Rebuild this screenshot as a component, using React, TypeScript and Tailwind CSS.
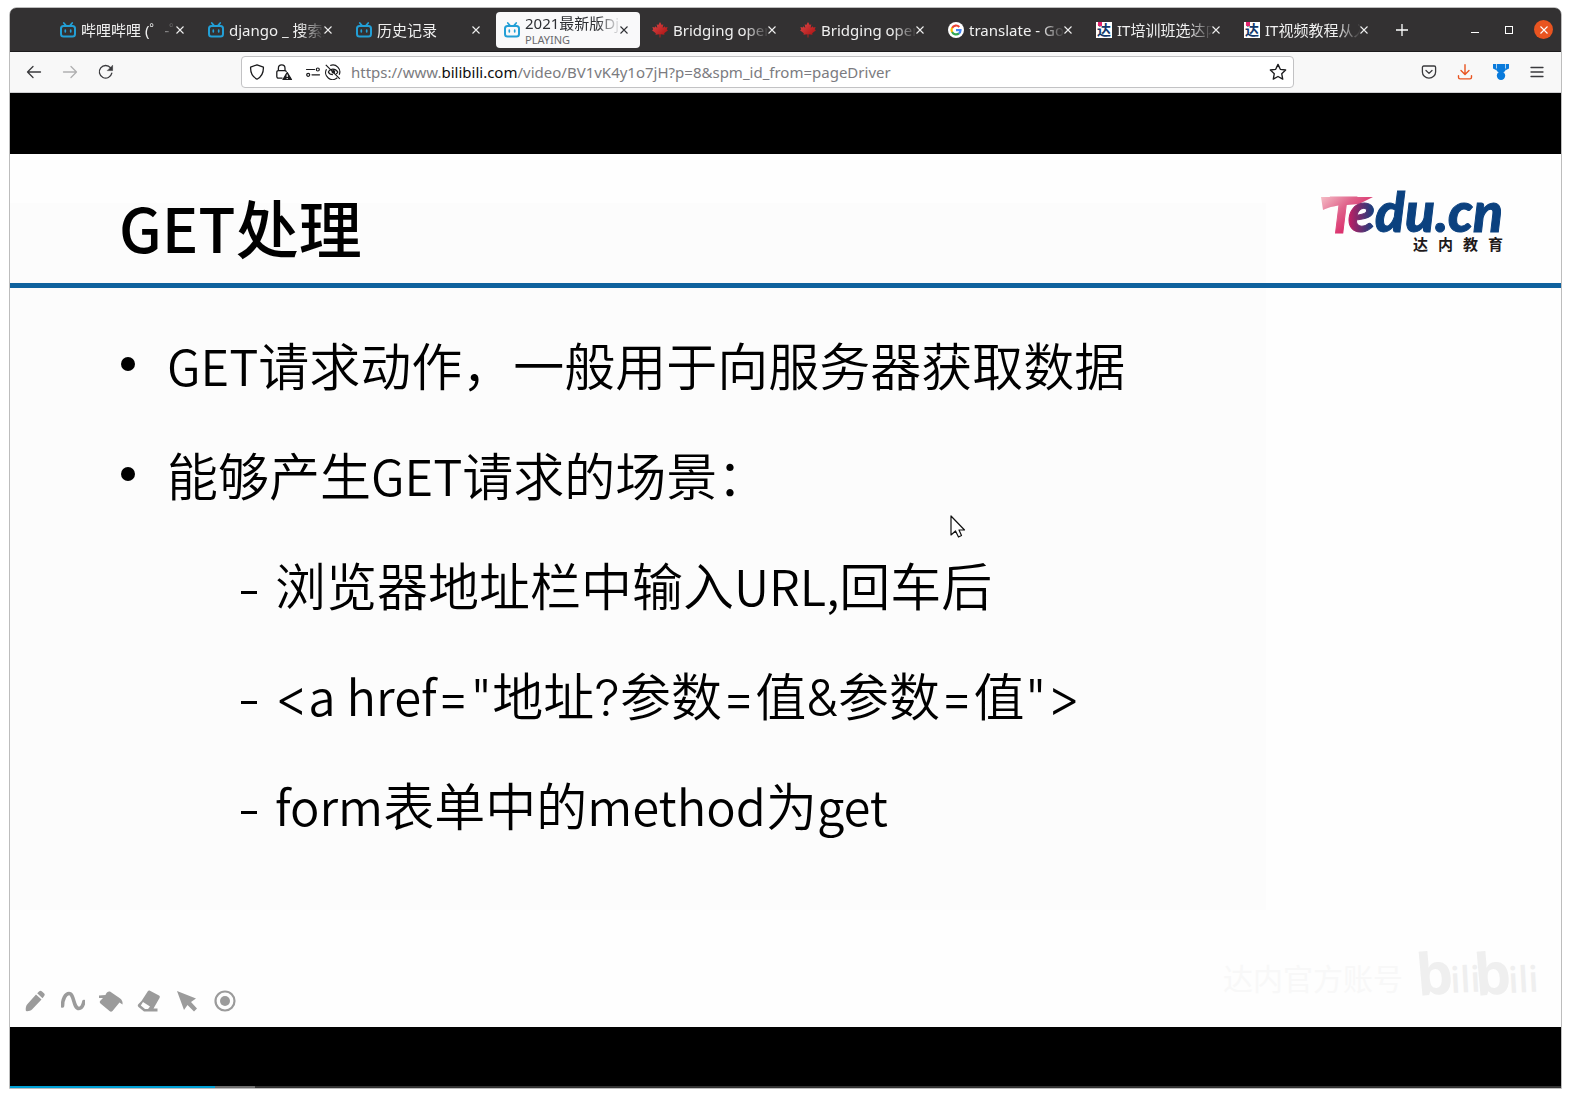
import type { ReactNode } from "react";

const UI_FONT = "font-['Noto_Sans','Noto_Sans_CJK_SC',sans-serif]";

function BiliIcon() {
  return (
    <svg viewBox="0 0 16 16" className="size-4 shrink-0" fill="none" stroke="#239fd6" strokeWidth="2" strokeLinecap="round">
      <rect x="1" y="4" width="14" height="10.5" rx="2.5" />
      <path d="M3.8 1l2 2.4M12.2 1l-2 2.4" strokeWidth="1.7" />
      <path d="M5.3 8.2v1.6M10.7 8.2v1.6" strokeWidth="1.7" />
    </svg>
  );
}

function MapleIcon() {
  return (
    <svg viewBox="0 0 16 16" className="size-4 shrink-0">
      <defs>
        <linearGradient id="maple" x1="0" y1="0" x2="1" y2="1">
          <stop offset="0" stopColor="#dc4a4a" />
          <stop offset="1" stopColor="#a80c0c" />
        </linearGradient>
      </defs>
      <path
        fill="url(#maple)"
        d="M8 0L9.7 2.9 11.3 2.2 10.7 6 12.7 4.3 13.2 5.4 15.6 5.1 14.8 7.4 16 8.2 12.2 11.2 12.5 12.8 8.5 12.3V15.6H7.5V12.3L3.5 12.8 3.8 11.2 0 8.2 1.2 7.4.4 5.1 2.8 5.4 3.3 4.3 5.3 6 4.7 2.2 6.3 2.9z"
      />
    </svg>
  );
}

function GoogleIcon() {
  return (
    <svg viewBox="0 0 16 16" className="size-4 shrink-0" fill="none" strokeWidth="2.2">
      <circle cx="8" cy="8" r="8" fill="#fff" />
      <path d="M4.1 5.9A4.500 4.500 0 0 1 11.300 4.900" stroke="#ea4335" />
      <path d="M4.100 10.200A4.500 4.500 0 0 1 4.100 5.800" stroke="#fbbc05" />
      <path d="M11 11.400A4.500 4.500 0 0 1 4.100 10" stroke="#34a853" />
      <path d="M8 8.200h4.500A4.500 4.500 0 0 1 10.900 11.500" stroke="#4285f4" />
    </svg>
  );
}

function DaIcon() {
  return (
    <span className="relative flex size-4 shrink-0 items-center justify-center overflow-hidden bg-white text-[14px] leading-4 font-bold text-[#12386b]">
      达
      <i className="absolute top-0 left-0.5 size-1 bg-[#e2246f]" />
    </span>
  );
}

function CloseMark() {
  return (
    <svg viewBox="0 0 8 8" className="size-2" fill="none" stroke="currentColor" strokeWidth="1.1">
      <path d="M.5.5l7 7M7.5.5l-7 7" />
    </svg>
  );
}

type TabData = { icon: ReactNode; title: string; active?: boolean };

const tabs: TabData[] = [
  { icon: <BiliIcon />, title: "哔哩哔哩 (゜-゜)つロ" },
  { icon: <BiliIcon />, title: "django _ 搜索结果" },
  { icon: <BiliIcon />, title: "历史记录" },
  { icon: <BiliIcon />, title: "2021最新版Django", active: true },
  { icon: <MapleIcon />, title: "Bridging open data" },
  { icon: <MapleIcon />, title: "Bridging open data" },
  { icon: <GoogleIcon />, title: "translate - Google" },
  { icon: <DaIcon />, title: "IT培训班选达内教育" },
  { icon: <DaIcon />, title: "IT视频教程从入门" },
];

function Tab({ icon, title, active }: TabData) {
  return (
    <div
      className={
        active
          ? "mx-0.5 flex h-9 min-w-0 flex-[0_1_144px] items-center gap-[5px] rounded bg-[#f9f9fa] pr-2 pl-2 text-[#2e3034]"
          : "mx-0.5 flex h-9 min-w-0 flex-[0_1_144px] items-center gap-[5px] rounded pr-2 pl-2 text-[#f0f0f0]"
      }
    >
      {icon}
      <button type="button" className="min-w-0 flex-1 text-left">
        <span
          className={
            active
              ? "block overflow-hidden mask-r-from-75% mask-r-to-100% text-[15px] leading-5 whitespace-nowrap"
              : "block overflow-hidden mask-r-from-75% mask-r-to-100% text-[15px] leading-6 whitespace-nowrap"
          }
        >
          {title}
        </span>
        {active && <span className="block text-[11px] leading-[13px] text-[#6a6a6e]">PLAYING</span>}
      </button>
      <button type="button" aria-label={`Close ${title}`} className="-ml-2.5 flex w-4 shrink-0 justify-center">
        <CloseMark />
      </button>
    </div>
  );
}

function TabStrip() {
  return (
    <div className="flex h-11 shrink-0 items-center rounded-t-md border-b border-[#1c1b1c] bg-[#333132] pr-2 pl-10">
      {tabs.map((t, i) => (
        <Tab key={i} {...t} />
      ))}
      <button type="button" aria-label="New tab" className="ml-3.5 text-white">
        <svg viewBox="0 0 12 12" className="size-3" stroke="currentColor" strokeWidth="1.3">
          <path d="M6 0v12M0 6h12" />
        </svg>
      </button>
      <div className="ml-auto flex items-center text-white">
        <button type="button" aria-label="Minimize" className="flex h-5 w-[34px] items-center justify-center">
          <span className="mt-1.5 h-px w-2 bg-white" />
        </button>
        <button type="button" aria-label="Maximize" className="flex h-5 w-[34px] items-center justify-center">
          <span className="size-2 border border-white" />
        </button>
        <button
          type="button"
          aria-label="Close window"
          className="ml-2 flex size-[19px] items-center justify-center rounded-full bg-[#e95420]"
        >
          <CloseMark />
        </button>
      </div>
    </div>
  );
}

function NavButton({ label, children, dim }: { label: string; children: ReactNode; dim?: boolean }) {
  return (
    <button
      type="button"
      aria-label={label}
      className={
        dim
          ? "flex h-9 w-9 items-center justify-center text-[#b0b0b1]"
          : "flex h-9 w-9 items-center justify-center text-[#3a3a3d]"
      }
    >
      <svg viewBox="0 0 16 16" className="size-4" fill="none" stroke="currentColor" strokeWidth="1.3" strokeLinecap="round" strokeLinejoin="round">
        {children}
      </svg>
    </button>
  );
}

function AddressBar() {
  return (
    <div className="mx-[117px] flex h-8 min-w-0 flex-1 items-center rounded border border-[#c2c2c4] bg-white pr-1.5 pl-[7px] text-[#1b1b1d]">
      <svg viewBox="0 0 16 16" className="size-4 shrink-0" fill="none" stroke="currentColor" strokeWidth="1.3">
        <path d="M8 .8L14.4 3.2C14.6 8.6 12.4 12.8 8 15.2 3.6 12.8 1.4 8.6 1.6 3.2z" strokeLinejoin="round" />
      </svg>
      <svg viewBox="0 0 18 16" className="ml-2.5 h-4 w-[18px] shrink-0" fill="none" stroke="currentColor" strokeWidth="1.3">
        <path d="M7.5 14.2H3.4A1.6 1.6 0 0 1 1.8 12.6V8.2A1.6 1.6 0 0 1 3.4 6.6H10a1.6 1.6 0 0 1 1.4 1.2M3.4 6.4V4.2a3.3 3.3 0 0 1 6.6 0v2.2" />
        <path d="M12.2 8.6L16.4 15.6H8z" fill="currentColor" strokeLinejoin="round" />
        <path d="M12.2 10.4v2.6M12.2 14v1.1" stroke="#fff" strokeWidth="1.2" />
      </svg>
      <svg viewBox="0 0 16 16" className="ml-3 size-4 shrink-0" fill="none" stroke="currentColor" strokeWidth="1.2">
        <path d="M1.500 5.500h8M7 10.800h7.500" strokeLinecap="round" />
        <circle cx="12.800" cy="5.500" r="1.500" />
        <circle cx="3.200" cy="10.800" r="1.500" />
      </svg>
      <svg viewBox="0 0 16 16" className="ml-1 size-4 shrink-0" fill="none" stroke="currentColor" strokeWidth="1.2">
        <path d="M5.200 1.500a7 7 0 0 1 9 9.300M12.300 13.800A7 7 0 0 1 1.500 5.200" />
        <path d="M3.200 7.800C4.500 6 6 5.200 7.800 5.200c2.100 0 3.900 1.100 5 2.800-.4.900-1 1.500-1.700 2M3.200 7.800c.8 1.900 2.600 2.900 4.700 2.900" />
        <circle cx="8.400" cy="7.700" r="1.200" fill="currentColor" />
        <path d="M.8.8l14 14" />
      </svg>
      <a
        href="https://www.bilibili.com/video/BV1vK4y1o7jH?p=8&spm_id_from=pageDriver"
        className="ml-2.5 min-w-0 flex-1 overflow-hidden text-[15px] whitespace-nowrap text-[#7b7b80]"
      >
        https://www.<span className="text-[#0c0c0d]">bilibili.com</span>/video/BV1vK4y1o7jH?p=8&amp;spm_id_from=pageDriver
      </a>
      <button type="button" aria-label="Bookmark this page">
        <svg viewBox="0 0 16 16" className="size-[18px]" fill="none" stroke="currentColor" strokeWidth="1.2" strokeLinejoin="round">
          <path d="M8 1.2l2.05 4.4 4.75.6-3.5 3.3.9 4.8L8 12l-4.2 2.3.9-4.8-3.5-3.3 4.75-.6z" />
        </svg>
      </button>
    </div>
  );
}

function Toolbar() {
  return (
    <div className="flex h-[41px] shrink-0 items-center border-b border-[#cfcfd1] bg-[#f8f8f8] px-1.5">
      <NavButton label="Back">
        <path d="M1.5 8h13M7 2.5L1.5 8 7 13.5" />
      </NavButton>
      <NavButton label="Forward" dim>
        <path d="M1.5 8h13M9 2.5L14.5 8 9 13.5" />
      </NavButton>
      <NavButton label="Reload">
        <path d="M13.8 9.2A6.3 6.3 0 1 1 12.6 3.9" />
        <path d="M14.6 1.6v5h-5z" fill="currentColor" strokeWidth=".6" />
      </NavButton>
      <AddressBar />
      <NavButton label="Save to Pocket">
        <path d="M2.8 2h10.4c.9 0 1.4.5 1.4 1.4V8a6.6 6.1 0 0 1-13.2 0V3.400c0-.9.5-1.400 1.400-1.400z" />
        <path d="M5 6.500l3 2.900 3-2.900" />
      </NavButton>
      <NavButton label="Downloads">
        <g stroke="#e95420" strokeWidth="1.4">
          <path d="M8 .8v9.400M4 6.500l4 4 4-4M1.500 11.800v1.500c0 1 .6 1.600 1.600 1.600h9.800c1 0 1.600-.6 1.600-1.600v-1.500" />
        </g>
      </NavButton>
      <NavButton label="Extension">
        <g fill="#0a7bdc" stroke="none">
          <path d="M0 0h3v6L0 4.500zM3.700 0h8.600v6.400L8 8.600 3.700 6.400zM13 0h3v4.500L13 6z" />
          <path d="M2.400 4.500h11.200L11 8.200H5z" />
          <circle cx="8" cy="11.800" r="4.200" />
        </g>
      </NavButton>
      <NavButton label="Open menu">
        <path d="M2 3.500h12M2 8h12M2 12.500h12" />
      </NavButton>
    </div>
  );
}

function TeduLogo() {
  return (
    <div className="flex flex-col items-end" role="img" aria-label="Tedu.cn 达内教育">
      <svg viewBox="0 0 184 41" className="h-[41px] w-[184px] overflow-visible">
        <defs>
          <linearGradient id="teduT" gradientUnits="userSpaceOnUse" x1="0" y1="2" x2="34" y2="40">
            <stop offset="0" stopColor="#f6c0c8" />
            <stop offset=".45" stopColor="#e0648c" />
            <stop offset="1" stopColor="#d8145c" />
          </linearGradient>
          <linearGradient id="teduE" gradientUnits="userSpaceOnUse" x1="26" y1="0" x2="54" y2="0">
            <stop offset="0" stopColor="#cf1c61" />
            <stop offset=".4" stopColor="#7e2a6c" />
            <stop offset="1" stopColor="#0b417f" />
          </linearGradient>
        </defs>
        <path d="M0 3H52L38 10 26 11C17 11 8 13 2 16z" fill="url(#teduT)" />
        <text x="6" y="39" fontFamily="Lato" fontWeight="900" fontStyle="italic" fontSize="50" fill="url(#teduT)" stroke="url(#teduT)">
          T
        </text>
        <text x="27" y="38" fontFamily="Lato" fontWeight="900" fontStyle="italic" fontSize="55" fill="url(#teduE)" stroke="url(#teduE)">
          edu.cn
        </text>
      </svg>
      <div className="flex gap-2.5 pr-0.5 text-[15px] leading-[18px] font-bold text-[#1f1a1b]">
        <span>达</span>
        <span>内</span>
        <span>教</span>
        <span>育</span>
      </div>
    </div>
  );
}

function Latin({ children }: { children: ReactNode }) {
  return <span className="text-[49px] leading-none">{children}</span>;
}

function Sym({ children }: { children: ReactNode }) {
  return <span className="font-['Inter',sans-serif] leading-none font-light">{children}</span>;
}

function Dash() {
  return <span className="mt-4 mr-[18px] h-[3px] w-4 bg-black" />;
}

function Slide() {
  return (
    <main className="relative flex flex-1 flex-col bg-[#fefefe] font-['Noto_Sans_CJK_SC',sans-serif] text-black">
      <div className="absolute top-[49px] left-0 h-[707px] w-[81%] bg-[#fcfcfc]" />
      <header className="relative flex h-[134px] shrink-0 items-start justify-between border-b-[5px] border-[#0f629e] pr-14 pl-[109px]">
        <h1 className="pt-6 text-[63px] leading-[96px] font-medium whitespace-nowrap">
          <span className="text-[61px] leading-none">GET</span>处理
        </h1>
        <div className="pt-10">
          <TeduLogo />
        </div>
      </header>

      <ul className="relative pt-[21px] pl-[111px] text-[51px] leading-[110px] font-[350] whitespace-nowrap">
        <li className="flex items-center">
          <span className="mr-8 size-3.5 rounded-full bg-black" />
          <p><Latin>GET</Latin>请求动作，一般用于向服务器获取数据</p>
        </li>
        <li>
          <div className="flex items-center">
            <span className="mr-8 size-3.5 rounded-full bg-black" />
            <p>能够产生<Latin>GET</Latin>请求的场景：</p>
          </div>
          <ul className="pl-[120px]">
            <li className="flex items-center">
              <Dash />
              <p>浏览器地址栏中输入<Latin>URL,</Latin>回车后</p>
            </li>
            <li className="flex items-center">
              <Dash />
              <p>
                <Sym>&lt;</Sym><Latin>a href</Latin><Sym>="</Sym>地址<Sym>?</Sym>参数<Sym>=</Sym>值<Sym>&amp;</Sym>参数<Sym>=</Sym>值<Sym>"&gt;</Sym>
              </p>
            </li>
            <li className="flex items-center">
              <Dash />
              <p><Latin>form</Latin>表单中的<Latin>method</Latin>为<Latin>get</Latin></p>
            </li>
          </ul>
        </li>
      </ul>

      <svg viewBox="0 0 16 24" className="absolute top-[361px] left-[940px] h-6 w-4" fill="#fff" stroke="#111" strokeWidth="1.200" strokeLinejoin="round">
        <path d="M1 1V20L5.500 16 8.500 22 11.500 20.500 9 15H14.500z" />
      </svg>

      <footer className="relative mt-auto flex items-end justify-between pr-7 pb-3.5 pl-[13px]">
        <DrawTools />
        <div className="flex items-end gap-4 pb-4 whitespace-nowrap">
          <span className="text-[30px] leading-[40px] text-[#f8f8f8]">达内官方账号</span>
          <BiliMark />
        </div>
      </footer>
    </main>
  );
}

function BiliMark() {
  return (
    <svg viewBox="0 0 114 50" className="h-[50px] w-[114px] overflow-visible" fill="#efefef" fontFamily="Open Sans" role="img" aria-label="bilibili">
      <text x="-1" y="49" fontSize="58" fontWeight="700" transform="rotate(-5 0 49)">b</text>
      <text x="32" y="46" fontSize="36" fontWeight="600" transform="rotate(-3 32 46)">ili</text>
      <text x="57" y="49" fontSize="58" fontWeight="700" transform="rotate(-5 58 49)">b</text>
      <text x="90" y="46" fontSize="36" fontWeight="600" transform="rotate(-3 90 46)">ili</text>
    </svg>
  );
}

function Tool({ label, children }: { label: string; children: ReactNode }) {
  return (
    <button type="button" aria-label={label} className="text-[#9b9b9b]">
      <svg viewBox="0 0 24 24" className="size-6" fill="currentColor">
        {children}
      </svg>
    </button>
  );
}

function DrawTools() {
  return (
    <div className="flex gap-3.5">
      <Tool label="Pencil">
        <path d="M13 5.500L18.500 10.500 9 20.500C7.500 22 3 23 2.800 21.500 2.500 19 3 16.500 4.500 15z" />
        <path d="M14.200 4.300L16 2.500C17 1.500 18 1.500 19 2.500L21 4.300C22 5.300 22 6 21 7.300L19.500 9.200z" />
      </Tool>
      <Tool label="Curve">
        <path d="M1.500 17C1.500 10 4.500 4.500 8 4.500 13.500 4.500 12 19.500 18 19.500 20.500 19.500 22 17 23 12.500" fill="none" stroke="currentColor" strokeWidth="3.600" strokeLinecap="round" />
      </Tool>
      <Tool label="Fill">
        <path d="M11 2.500L20.500 9C23 10.500 24 13 23.500 15.500L20.500 13.500 13.500 22C12.500 23 11.500 23 10.500 22L1.500 14.500C.5 13.500.5 12.500 1.500 11.500L4 9H0V6.500L6.500 6C7 4 9 2 11 2.500z" />
      </Tool>
      <Tool label="Eraser">
        <path fillRule="evenodd" d="M12.500 1.500L22 6.500C23 7 23 8 22.500 9L16.500 19.500H20.500V22.500H7L1.500 18C.5 17 .5 16 1.500 15L4.500 12 11 2C11.500 1.300 12 1.300 12.500 1.500zM6 13L3.800 16.500 8 20H11L13 17.500z" />
      </Tool>
      <Tool label="Pointer">
        <path d="M2 2L21 9.500 16 13 22 19.500 19 22.500 12.500 16 9 21z" />
      </Tool>
      <Tool label="Laser">
        <circle cx="12" cy="12" r="9.500" fill="none" stroke="currentColor" strokeWidth="2.200" />
        <circle cx="12" cy="12" r="5" />
      </Tool>
    </div>
  );
}

export default function App() {
  return (
    <div className={`flex min-h-screen flex-col bg-white px-[9px] pt-[7px] pb-[9px] ${UI_FONT}`}>
      <div className="flex flex-1 flex-col rounded-t-lg border border-[#bdbdbd]">
        <TabStrip />
        <Toolbar />
        <div className="flex flex-1 flex-col bg-black pt-[61px]">
          <Slide />
          <div className="h-[59px] shrink-0" />
          <div className="flex h-0.5 shrink-0 bg-[#333]" role="progressbar" aria-label="Playback" aria-valuenow={13}>
            <span className="w-[13.2%] bg-[#00a1d6]" />
            <span className="w-[2.6%] bg-[#6f6f6f]" />
          </div>
        </div>
      </div>
    </div>
  );
}
